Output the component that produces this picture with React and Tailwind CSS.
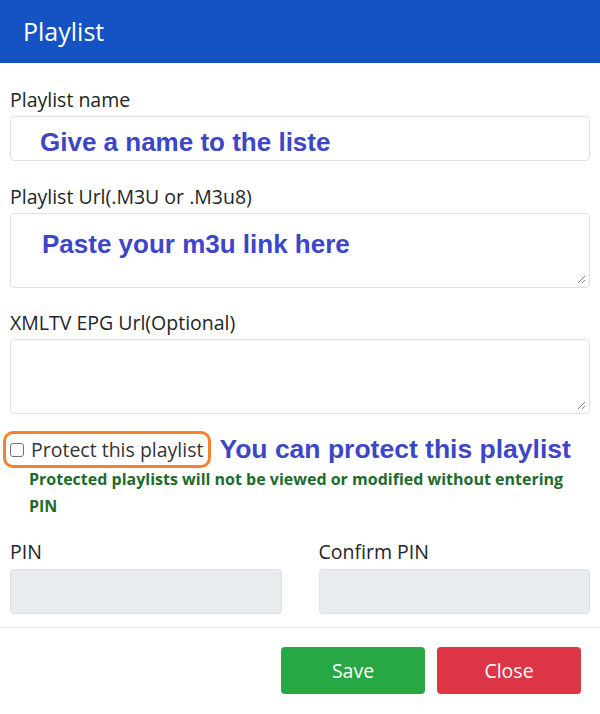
export default function App() {
  const sans = { fontFamily: '"Open Sans", "Noto Sans", sans-serif' }
  const arial = { fontFamily: '"Liberation Sans", Arial, sans-serif' }

  return (
    <div className="w-[600px] h-[714px] bg-white overflow-hidden text-[#212529]" style={sans}>
      {/* Header */}
      <div className="h-[63px] bg-[#1553c4] flex items-center px-[23px]">
        <h1 className="text-white text-[25px] font-normal leading-none">Playlist</h1>
      </div>

      <div className="px-[10px] pt-[25px]">
        <label className="block text-[19.5px] leading-[24px] mb-[4px]">Playlist name</label>
        <div className="h-[45px] border border-[#dee2e6] rounded-[4px] flex items-center pl-[29px] pt-[7px]">
          <span className="text-[#3d46c6] font-bold text-[26px] leading-none" style={arial}>
            Give a name to the liste
          </span>
        </div>

        <label className="block text-[19.5px] leading-[24px] mt-[24px] mb-[4px]">Playlist Url(.M3U or .M3u8)</label>
        <div className="relative h-[75px] border border-[#dee2e6] rounded-[4px] pl-[31px] pt-[17px]">
          <span className="block text-[#3d46c6] font-bold text-[26px] leading-none" style={arial}>
            Paste your m3u link here
          </span>
          <ResizeGrip />
        </div>

        <label className="block text-[19.5px] leading-[24px] mt-[23px] mb-[4px]">XMLTV EPG Url(Optional)</label>
        <div className="relative h-[75px] border border-[#dee2e6] rounded-[4px]">
          <ResizeGrip />
        </div>

        <div className="flex items-center mt-[17px] -ml-[7px]">
          <div className="flex items-center gap-[7px] border-[3px] border-[#f4822d] rounded-[10px] h-[37px] pl-[4px] pr-[5px]">
            <span className="w-[14px] h-[14px] border border-[#6c757d] rounded-[3px] bg-white" />
            <span className="text-[19.5px] leading-none text-[#333]">Protect this playlist</span>
          </div>
          <span className="ml-[8px] text-[#3d46c6] font-bold text-[26.5px] leading-none" style={arial}>
            You can protect this playlist
          </span>
        </div>
        <p className="ml-[19px] -mt-[2px] text-[#1d6b2c] font-bold text-[16px] leading-[27px] pr-[14px]">
          Protected playlists will not be viewed or modified without entering PIN
        </p>

        <div className="grid grid-cols-2 gap-[37px] mt-[20px]">
          <div>
            <label className="block text-[19.5px] leading-[24px] mb-[5px]">PIN</label>
            <div className="h-[45px] bg-[#e9ecef] border border-[#dee2e6] rounded-[4px]" />
          </div>
          <div>
            <label className="block text-[19.5px] leading-[24px] mb-[5px]">Confirm PIN</label>
            <div className="h-[45px] bg-[#e9ecef] border border-[#dee2e6] rounded-[4px]" />
          </div>
        </div>
      </div>

      <div className="mt-[13px] border-t border-[#eceeef]" />

      <div className="flex justify-end gap-[12px] pr-[19px] pt-[19px]">
        <button className="w-[144px] h-[47px] bg-[#28a745] text-white text-[19.5px] rounded-[4px]">Save</button>
        <button className="w-[144px] h-[47px] bg-[#dc3545] text-white text-[19.5px] rounded-[4px]">Close</button>
      </div>
    </div>
  )
}

function ResizeGrip() {
  return (
    <svg className="absolute right-[3px] bottom-[3px]" width="10" height="10" viewBox="0 0 10 10">
      <path d="M9 2 L2 9 M9 6 L6 9" stroke="#888" strokeWidth="1" fill="none" />
    </svg>
  )
}
